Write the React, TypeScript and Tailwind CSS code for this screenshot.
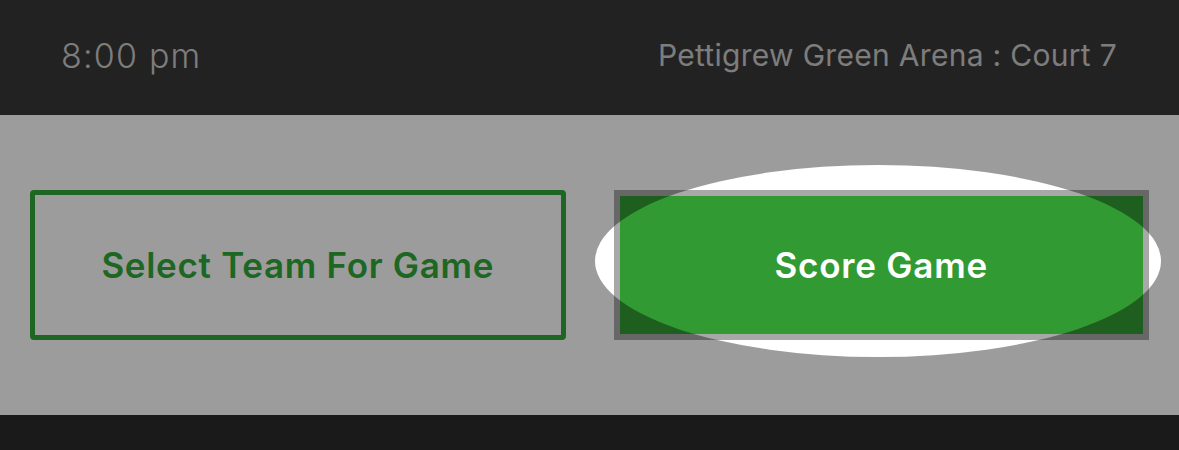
import React from 'react';

// Coach-mark style screen: the whole page is dimmed except an elliptical spotlight on "Score Game".
export default function App() {
  return (
    <div
      className="relative w-[1179px] h-[450px] overflow-hidden flex flex-col"
      style={{ fontFamily: 'Inter, "Noto Sans", sans-serif' }}
    >
      {/* Header: time + venue */}
      <header className="h-[115px] bg-[#393939] flex items-center justify-between pl-[61px] pr-[62px] pb-[4px]">
        <span className="text-[34px] font-light text-[#cccccc] tracking-[1.2px]">8:00 pm</span>
        <span className="text-[30px] font-normal text-[#cccccc] tracking-[0.3px]">Pettigrew Green Arena : Court 7</span>
      </header>

      {/* Actions */}
      <main className="h-[300px] bg-white grid grid-cols-2 gap-[48px] px-[30px] py-[75px]">
        <button className="h-[150px] rounded-[4px] border-[5px] border-[#32a83a] flex items-center justify-center">
          <span className="text-[35px] font-semibold text-[#32a83a] tracking-[0.7px]">Select Team For Game</span>
        </button>

        <div className="relative">
          <button className="w-full h-[150px] border-[6px] border-[#a8a8a8] bg-[#329a32] flex items-center justify-center">
            <span className="text-[35px] font-semibold text-white tracking-[0.8px]">Score Game</span>
          </button>
          {/* spotlight */}
          <div className="absolute left-[-19px] top-[-25px] w-[566px] h-[192px] rounded-[50%] pointer-events-none z-10 shadow-[0_0_0_2000px_rgba(0,0,0,0.388)]" />
        </div>
      </main>

      <footer className="flex-1 bg-[#2c2c2c]" />
    </div>
  );
}
